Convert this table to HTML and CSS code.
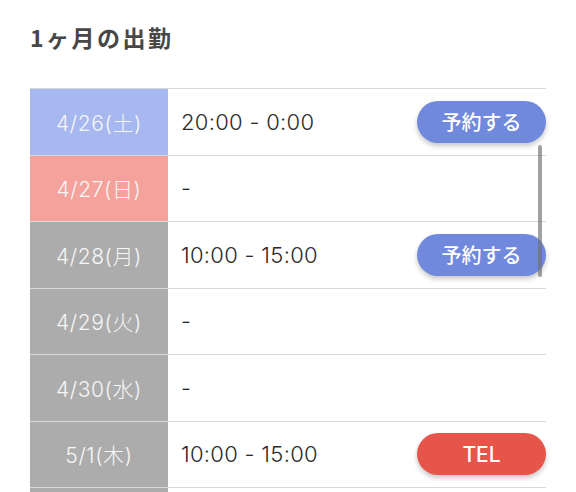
FILE: index.html
```html
<!DOCTYPE html>
<html lang="ja">
<head>
<meta charset="utf-8">
<link rel="stylesheet" href="styles.css">
</head>
<body>
<div class="page">
  <h2 class="title">1ヶ月の出勤</h2>
  <div class="schedule">
    <div class="row">
      <div class="date sat">4/26(土)</div>
      <div class="info"><span class="time">20:00 - 0:00</span><button class="btn reserve">予約する</button></div>
    </div>
    <div class="row">
      <div class="date sun">4/27(日)</div>
      <div class="info"><span class="time">-</span></div>
    </div>
    <div class="row">
      <div class="date">4/28(月)</div>
      <div class="info"><span class="time">10:00 - 15:00</span><button class="btn reserve">予約する</button></div>
    </div>
    <div class="row">
      <div class="date">4/29(火)</div>
      <div class="info"><span class="time">-</span></div>
    </div>
    <div class="row">
      <div class="date">4/30(水)</div>
      <div class="info"><span class="time">-</span></div>
    </div>
    <div class="row">
      <div class="date">5/1(木)</div>
      <div class="info"><span class="time">10:00 - 15:00</span><button class="btn tel">TEL</button></div>
    </div>
    <div class="row">
      <div class="date"></div>
      <div class="info"></div>
    </div>
    <div class="scrollbar"></div>
  </div>
</div>
</body>
</html>
```
FILE: styles.css
```css
html, body {
  margin: 0;
  padding: 0;
  background: #fff;
  overflow: hidden;
  height: 492px;
}
body {
  font-family: "Noto Sans CJK JP", "Noto Sans", sans-serif;
}
.page {
  padding: 0 30px;
}
.title {
  margin: 0;
  padding-top: 21px;
  height: 88px;
  box-sizing: border-box;
  font-size: 23px;
  font-weight: 700;
  color: #474747;
  letter-spacing: 2.5px;
  line-height: 32px;
}
.schedule {
  position: relative;
  border-top: 1px solid #d9d9d9;
}
.row {
  display: flex;
  height: 65.5px;
  border-bottom: 1px solid #d9d9d9;
}
.date {
  width: 138px;
  flex: none;
  background: #acacac;
  color: #f6f6f6;
  font-family: "Inter", "Noto Sans CJK JP", sans-serif;
  font-size: 21px;
  font-weight: 300;
  letter-spacing: 0.6px;
  display: flex;
  align-items: center;
  justify-content: center;
}
.date.sat { background: #a7b7ef; }
.date.sun { background: #f4a29b; }
.info {
  flex: 1;
  display: flex;
  align-items: center;
  justify-content: space-between;
  padding-left: 13px;
}
.time {
  font-family: "Inter", "Noto Sans CJK JP", sans-serif;
  font-size: 22px;
  color: #2a2a2a;
  font-weight: 300;
  letter-spacing: 0.3px;
}
.btn {
  border: none;
  width: 129px;
  height: 42px;
  border-radius: 21px;
  color: #fff;
  font-family: "Noto Sans CJK JP", "Noto Sans", sans-serif;
  font-size: 20px;
  font-weight: 500;
  box-shadow: 0 3px 5px rgba(0, 0, 0, 0.22);
  padding: 0;
}
.btn.reserve { background: #7089dc; }
.btn.tel {
  background: #e6554a;
  font-family: "Inter", "Noto Sans", sans-serif;
  font-size: 21px;
  font-weight: 500;
}
.scrollbar {
  position: absolute;
  right: 4px;
  top: 56px;
  width: 4px;
  height: 132px;
  border-radius: 2px;
  background: rgba(110, 110, 110, 0.65);
}
```
